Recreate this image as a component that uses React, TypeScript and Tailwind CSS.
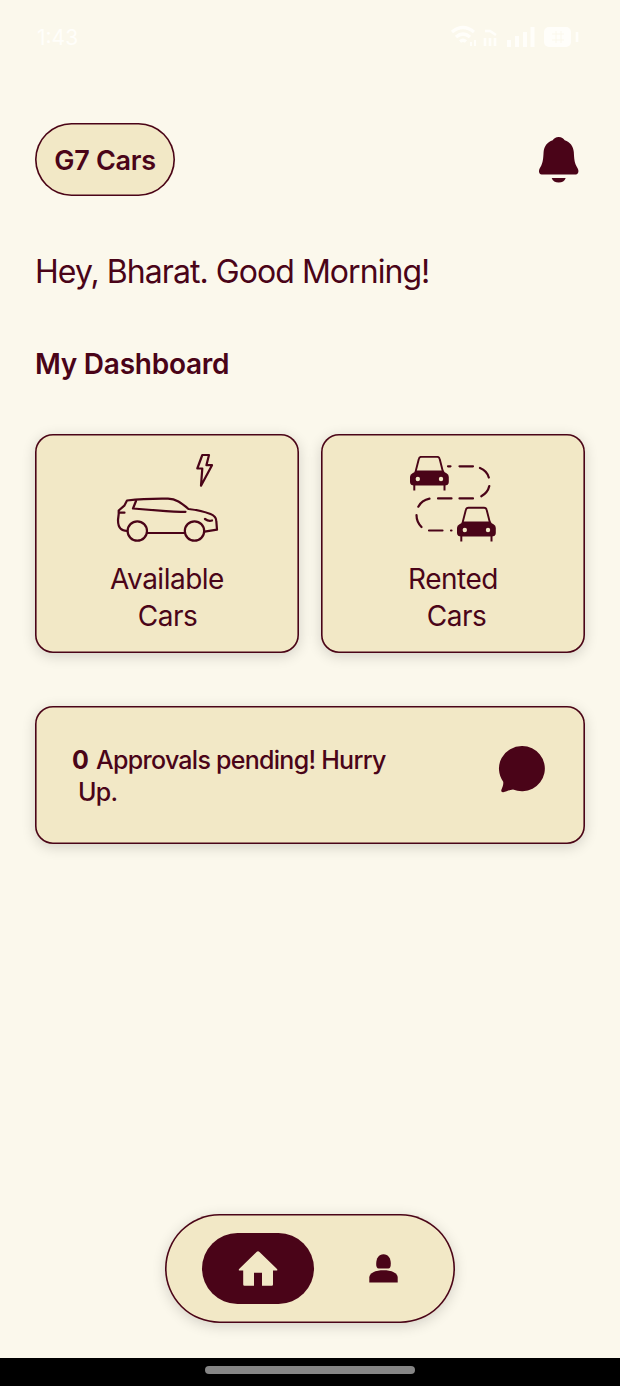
import React from "react";

const INK = "#4a0418";
const SAND = "#f2e8c6";

function StatusIcons() {
  return (
    <svg width="136" height="28" viewBox="450 24 136 28" fill="none" stroke="#fffefa" strokeWidth="2.6">
      <path d="M452 32q11-9 22 0M456 37q7-6 14 0M460 41.500q3-2.500 6 0" strokeWidth="3.200" />
      <path d="M471 42v4M475 40v6" strokeWidth="2" />
      <path d="M485 46v-8M490 46v-8M495 46v-8M485 31h5l6 4" strokeWidth="2.500" />
      <path d="M509 47v-7M517 47v-11M525 47v-15M532.500 47V27" strokeWidth="4" />
      <rect x="544" y="27" width="27" height="20" rx="5" fill="#fffefa" stroke="none" />
      <path d="M552 34h12M552 40h12M556 31v12M561 31v12" stroke="#fbf8ec" strokeWidth="1" />
      <path d="M577 32v10" />
    </svg>
  );
}

function BellIcon() {
  return (
    <svg width="40" height="47" viewBox="539 136 40 47" fill={INK}>
      <path d="M558.700 137c-2.900 0-4.800 1.400-6 3.300c-5.300 1.700-8.600 6-9.100 11.800c-.4 7.500-.8 10.200-2.300 13.500c-.8 1.900-2.100 3.300-2.300 5.200c-.2 2 .9 3.700 2.600 3.700h34.200c1.700 0 2.800-1.700 2.600-3.700c-.2-1.900-1.500-3.300-2.300-5.200c-1.500-3.300-1.900-6-2.300-13.500c-.5-5.800-3.800-10.100-9.100-11.800c-1.200-1.900-3.100-3.300-6-3.300z" />
      <path d="M551.700 178h14c-.9 2.900-3.600 4.600-7 4.600s-6.100-1.700-7-4.600z" />
    </svg>
  );
}

function ElectricCarIcon() {
  return (
    <svg width="104" height="92" viewBox="115 452 104 92" fill="none" stroke={INK} strokeWidth="2.200" strokeLinecap="round" strokeLinejoin="round">
      <path d="M202.300 455h6.700l-2.600 10.200h5.600l-11 20.500l1.300-17.200h-5z" />
      <path d="M127.300 531c-3-.3-4.800-.5-6.600-2.300c-2.700-2.400-2.700-5.200-2.700-8.700l.7-6v-3.500l5.600-4.800l2.700-5.200c13-1.500 27-2 41-1.800c8 .2 13 4 20.500 10.300c9 1 18 3.500 22 5.100c3.700 1.500 5.700 3.800 5.800 6.800l.7 8.800l-12.500 2" />
      <path d="M119 512.700h5.500M136 501l-3 7.500l33 2.700c7 .6 13 1 19.500.6M147.500 533h36.500M205 519c2.300 1.700 4.700 2.200 7 1.500" />
      <circle cx="137.300" cy="531" r="9.700" />
      <circle cx="194.500" cy="531" r="9.700" />
    </svg>
  );
}

function FrontCar({ x, y }: { x: number; y: number }) {
  return (
    <g transform={`translate(${x} ${y})`}>
      <path d="M5.500 17l3.300-13q.5-2.200 2.700-2.200h15.500q2.200 0 2.700 2.200l3.300 13" fill="none" stroke={INK} strokeWidth="1.900" />
      <path d="M5.500 15.500h28q1 2 3 2.800q2.300 1 2.300 3.700v5q0 3.500-4.500 3.500H4.500Q0 30.500 0 27v-5q0-2.700 2.500-3.700q2-.8 3-2.800z" fill={INK} />
      <path d="M4.300 29.500v6M34.500 29.500v6" stroke={INK} strokeWidth="2" />
      <circle cx="7.800" cy="24" r="2.200" fill={SAND} />
      <circle cx="31" cy="24" r="2.200" fill={SAND} />
    </g>
  );
}

function RentedIcon() {
  return (
    <svg width="88" height="88" viewBox="409 456 88 88">
      <g fill="none" stroke={INK} strokeWidth="2.200" strokeLinecap="round">
        <path d="M448 466.300h2.500M459.500 466.300H473M480 468c4.500 1.700 7.500 5 8.800 9.500M489.300 486c-1 4.500-4 8-8 10.300M473 498.400h-13.500M451.500 498.400H438M429.500 498.700c-5 1-9 4-11.200 8M416.500 515c0 4.500 2 9 5 12M429 530.500h13.500M451 530.500h.5" />
      </g>
      <FrontCar x={410} y={455} />
      <FrontCar x={457} y={506} />
    </svg>
  );
}

const surface = "bg-[#f2e8c6] shadow-[inset_0_0_0_1.600px_#4a0418,0_3px_14px_rgba(0,0,0,0.16)]";

function Card({ icon, title, second }: { icon: React.ReactNode; title: string; second: string }) {
  return (
    <button className={`flex h-[219px] w-[264px] flex-col items-center rounded-[18px] text-[28px] leading-[37px] tracking-[-0.500px] ${surface}`}>
      <span className="flex h-[127px] items-end pb-[17px]">{icon}</span>
      <span>{title}</span>
      <span className={second}>Cars</span>
    </button>
  );
}

export default function App() {
  return (
    <div className="flex h-[1386px] w-[620px] flex-col bg-[#fbf8ec] font-['Inter','Liberation_Sans',sans-serif] text-[#4a0418]">
      <div className="flex h-[123px] items-start justify-between pt-6 pr-[34px] pl-[37px]">
        <span className="text-[21px] leading-[28px] text-[#fffefa]">1:43</span>
        <StatusIcons />
      </div>
      <header className="flex h-[73px] items-center justify-between pr-[41px] pl-[35px]">
        <div className="flex h-[73px] w-[140px] items-center justify-center rounded-full bg-[#f2e8c6] pt-1 shadow-[inset_0_0_0_1.600px_#4a0418]">
          <span className="text-[27px] font-semibold tracking-[-0.300px] whitespace-nowrap">G7 Cars</span>
        </div>
        <BellIcon />
      </header>
      <main className="flex flex-1 flex-col px-[35px]">
        <h1 className="mt-[56px] text-[32px] leading-[40px] font-normal tracking-[-0.950px] whitespace-nowrap">Hey, Bharat. Good Morning!</h1>
        <h2 className="mt-[54px] text-[28px] leading-[36px] font-semibold tracking-[-0.250px] whitespace-nowrap">My Dashboard</h2>
        <div className="mt-[52px] flex justify-between">
          <Card icon={<ElectricCarIcon />} title="Available" second="pl-px" />
          <Card icon={<RentedIcon />} title="Rented" second="pl-[7px]" />
        </div>
        <section className={`mt-[53px] flex h-[138px] items-start justify-between rounded-[18px] pt-[38px] pr-[39px] pl-[37px] ${surface}`}>
          <p className="text-[25px] leading-[32px] font-medium tracking-[-0.730px]">
            <b className="mr-[2px] font-bold">0</b> <span>Approvals pending! Hurry</span>
            <br />
            <span className="pl-[6px]">Up.</span>
          </p>
          <svg className="mt-px" width="48" height="48" viewBox="498 745 48 48" fill={INK}>
            <path d="M522.300 746a22.900 22.600 0 1 1-9.300 43.400c-3.500.4-6.500 2.200-9.800 2.800c-1.800.2-2.300-1-1.700-2.600c.9-2.500 2.200-4.700 1.700-7.900A22.900 22.600 0 0 1 522.300 746z" />
          </svg>
        </section>
      </main>
      <nav className={`mb-[35px] flex h-[109px] w-[290px] items-center self-center rounded-full pl-[37px] ${surface}`}>
        <button className="flex h-[71px] w-[112px] items-center justify-center rounded-full bg-[#4a0418]">
          <svg width="40" height="36" viewBox="238 1250.500 40 36" fill={SAND}>
            <path d="M256.500 1251.500q1.500-1.300 3 0l17.500 17q1 1.500-.7 1.500H273v14q0 1.300-1.300 1.300H262v-13h-8v13h-9.500q-1.300 0-1.300-1.300v-14h-3.400q-1.700 0-.7-1.500z" />
          </svg>
        </button>
        <button className="ml-[55px]">
          <svg width="30" height="30" viewBox="369 1254 30 30" fill={INK}>
            <path d="M383.500 1254.300c4.700 0 7.300 4 7.300 9.500c0 3.300-.8 4.700-2.500 4.700h-9.600c-1.700 0-2.500-1.400-2.500-4.700c0-5.500 2.600-9.500 7.300-9.500z" />
            <path d="M369.300 1282.500v-5c0-4.500 6-7.300 14.200-7.300s14.200 2.800 14.200 7.300v5z" />
          </svg>
        </button>
      </nav>
      <footer className="flex h-7 justify-center bg-black pt-2">
        <div className="h-2 w-[210px] rounded-full bg-[#858585]" />
      </footer>
    </div>
  );
}
